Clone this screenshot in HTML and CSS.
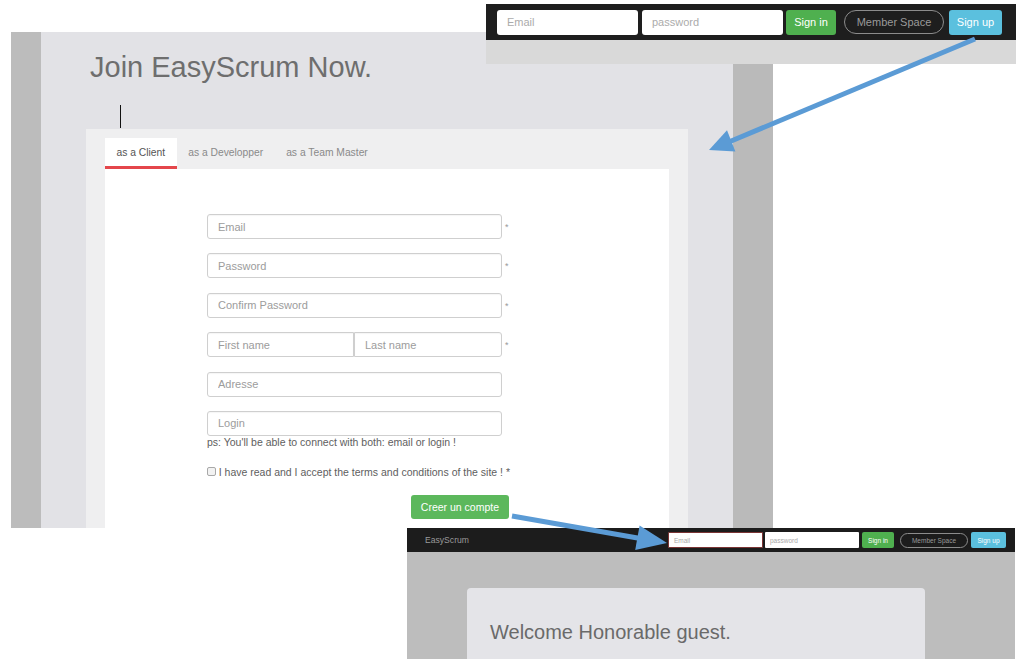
FILE: index.html
```html
<!DOCTYPE html>
<html lang="en">
<head>
<meta charset="utf-8">
<title>Join EasyScrum Now.</title>
<link rel="stylesheet" href="styles.css">
</head>
<body>
<div class="canvas">

  <section class="shot shot-main">
    <div class="strip-left"></div>
    <div class="main-area">
      <h1 class="title">Join EasyScrum Now.</h1>
      <div class="caret"></div>
      <div class="card">
        <div class="tabs">
          <div class="tab active">as a Client</div>
          <div class="tab">as a Developper</div>
          <div class="tab">as a Team Master</div>
        </div>
        <div class="panel">
          <form class="form">
            <div class="row"><input class="field" placeholder="Email"><span class="req">*</span></div>
            <div class="row"><input class="field" placeholder="Password"><span class="req">*</span></div>
            <div class="row"><input class="field" placeholder="Confirm Password"><span class="req">*</span></div>
            <div class="row"><input class="field first" placeholder="First name"><input class="field last" placeholder="Last name"><span class="req">*</span></div>
            <div class="row"><input class="field" placeholder="Adresse"></div>
            <div class="row row-last"><input class="field" placeholder="Login"></div>
            <p class="note">ps: You'll be able to connect with both: email or login !</p>
            <div class="check-row"><span class="checkbox"></span><span class="check-label">I have read and I accept the terms and conditions of the site ! *</span></div>
            <div class="btn-create">Creer un compte</div>
          </form>
        </div>
      </div>
    </div>
    <div class="strip-right"></div>
  </section>

  <section class="shot shot-top">
    <div class="topbar">
      <div class="t-input t-email">Email</div>
      <div class="t-input t-pass">password</div>
      <div class="t-btn t-signin">Sign in</div>
      <div class="t-pill">Member Space</div>
      <div class="t-btn t-signup">Sign up</div>
    </div>
    <div class="topstrip"></div>
  </section>

  <section class="shot shot-bottom">
    <div class="bbar">
      <span class="brand">EasyScrum</span>
      <div class="bgroup">
        <div class="b-input b-email">Email</div>
        <div class="b-input b-pass">password</div>
        <div class="b-btn b-signin">Sign in</div>
        <div class="b-pill">Member Space</div>
        <div class="b-btn b-signup">Sign up</div>
      </div>
    </div>
    <div class="bpanel">
      <p class="welcome">Welcome Honorable guest.</p>
    </div>
  </section>

  <svg class="arrows" width="1024" height="666" viewBox="0 0 1024 666" aria-hidden="true">
    <line x1="975" y1="39" x2="730" y2="141.5" stroke="#5b9bd5" stroke-width="5"/>
    <polygon points="709,150 735.4,151.5 727,130.3" fill="#5b9bd5"/>
    <line x1="512" y1="516" x2="639" y2="538.3" stroke="#5b9bd5" stroke-width="5"/>
    <polygon points="667,543 639.6,525.5 635.2,550.1" fill="#5b9bd5"/>
  </svg>
</div>
</body>
</html>
```

FILE: styles.css
```css
html, body {
  margin: 0;
  padding: 0;
  background: #ffffff;
}

.canvas {
  position: relative;
  width: 1024px;
  height: 666px;
  overflow: hidden;
  background: #ffffff;
  font-family: "Liberation Sans", Arial, sans-serif;
}

.shot {
  position: absolute;
  box-sizing: border-box;
}

/* ---------- main screenshot ---------- */
.shot-main {
  left: 11px;
  top: 32px;
  width: 762px;
  height: 496px;
  display: flex;
  overflow: hidden;
}

.strip-left {
  width: 30px;
  background: #bcbcbc;
}

.strip-right {
  width: 40px;
  background: #bababa;
}

.main-area {
  width: 692px;
  background: #e2e2e6;
  padding-top: 18px;
  box-sizing: border-box;
  display: flex;
  flex-direction: column;
}

.title {
  margin: 0 0 0 49px;
  font-size: 29px;
  line-height: 34px;
  font-weight: normal;
  color: #6e6e6e;
}

.caret {
  margin: 21px 0 0 79px;
  width: 1px;
  height: 23px;
  background: #111111;
}

.card {
  margin: 1px 0 0 45px;
  width: 602px;
  flex: 1;
  background: #efeff0;
  padding: 9px 19px 0;
  box-sizing: border-box;
  display: flex;
  flex-direction: column;
}

.tabs {
  display: flex;
  align-items: flex-start;
  height: 31px;
}

.tab {
  height: 28px;
  padding: 0 11.5px;
  display: flex;
  align-items: center;
  font-size: 10.3px;
  color: #8a8a8a;
}

.tab.active {
  background: #ffffff;
  color: #555555;
  border-bottom: 3px solid #e4464b;
}

.panel {
  flex: 1;
  background: #ffffff;
  padding: 45px 0 0 102px;
}

.form {
  width: 303px;
  margin: 0;
  display: flex;
  flex-direction: column;
}

.row {
  display: flex;
  align-items: flex-start;
  margin-bottom: 14.4px;
}

.row-last {
  margin-bottom: 0;
}

.field {
  width: 295px;
  height: 25px;
  box-sizing: border-box;
  margin: 0;
  border: 1px solid #cfcfcf;
  border-radius: 3px;
  padding: 0 10px;
  font-family: "Liberation Sans", Arial, sans-serif;
  font-size: 11px;
  color: #555;
  background: #fff;
  outline: none;
  box-shadow: inset 0 1px 1px rgba(0,0,0,0.04);
}

.field::placeholder {
  color: #9c9c9c;
}

.field.first {
  width: 147px;
  border-radius: 3px 0 0 3px;
}

.field.last {
  width: 148px;
  border-radius: 0 3px 3px 0;
}

.req {
  margin: 8px 0 0 3px;
  font-size: 9px;
  line-height: 10px;
  color: #9a9a9a;
}

.note {
  margin: 0;
  font-size: 10.5px;
  line-height: 12px;
  color: #5e5e5e;
}

.check-row {
  margin-top: 18px;
  display: flex;
  align-items: center;
  height: 12px;
}

.checkbox {
  width: 9px;
  height: 9px;
  box-sizing: border-box;
  border: 1px solid #a8a8a8;
  border-radius: 2px;
  background: #f2f2f2;
}

.check-label {
  margin-left: 3px;
  font-size: 10.5px;
  line-height: 12px;
  color: #5e5e5e;
  white-space: nowrap;
}

.btn-create {
  align-self: flex-end;
  margin: 17px 1px 0 0;
  height: 24px;
  padding: 0 10px;
  display: flex;
  align-items: center;
  border-radius: 3px;
  background: #5cb85c;
  color: #ffffff;
  font-size: 10.5px;
}

/* ---------- top navbar screenshot ---------- */
.shot-top {
  left: 486px;
  top: 4px;
  width: 530px;
  display: flex;
  flex-direction: column;
}

.topbar {
  height: 36px;
  background: #1e1e1e;
  display: flex;
  align-items: center;
  padding: 0 14px 0 11px;
}

.topstrip {
  height: 24px;
  background: #d9d9d9;
}

.t-input {
  width: 141px;
  height: 25px;
  box-sizing: border-box;
  border-radius: 3px;
  background: #ffffff;
  padding: 0 10px;
  display: flex;
  align-items: center;
  font-size: 11px;
  color: #ababab;
}

.t-pass { margin-left: 4px; }

.t-btn {
  height: 25px;
  border-radius: 3px;
  display: flex;
  align-items: center;
  justify-content: center;
  font-size: 11px;
  color: #ffffff;
}

.t-signin {
  width: 50px;
  margin-left: 3px;
  background: #4fb04f;
}

.t-pill {
  width: 100px;
  height: 24px;
  margin-left: 8px;
  box-sizing: border-box;
  border: 1px solid #8c8c8c;
  border-radius: 12px;
  display: flex;
  align-items: center;
  justify-content: center;
  font-size: 11px;
  color: #9a9a9a;
}

.t-signup {
  width: 53px;
  margin-left: 5px;
  background: #5bc0de;
}

/* ---------- bottom screenshot ---------- */
.shot-bottom {
  left: 407px;
  top: 528px;
  width: 608px;
  height: 131px;
  background: #bdbdbd;
  display: flex;
  flex-direction: column;
  overflow: hidden;
}

.bbar {
  height: 24px;
  flex: none;
  background: #1c1c1c;
  display: flex;
  align-items: center;
  padding: 0 9px 0 18px;
}

.brand {
  font-size: 8.6px;
  color: #9a9a9a;
}

.bgroup {
  margin-left: auto;
  display: flex;
  align-items: center;
}

.b-input {
  height: 16px;
  box-sizing: border-box;
  background: #ffffff;
  padding: 0 5px;
  display: flex;
  align-items: center;
  font-size: 6.5px;
  color: #a8a8a8;
  border-radius: 1px;
}

.b-email {
  width: 95px;
  border: 1px solid #7a3434;
}

.b-pass {
  width: 94px;
  margin-left: 2px;
}

.b-btn {
  height: 16px;
  border-radius: 2px;
  display: flex;
  align-items: center;
  justify-content: center;
  font-size: 6.5px;
  color: #ffffff;
}

.b-signin {
  width: 32px;
  margin-left: 3px;
  background: #4fb04f;
}

.b-pill {
  width: 68px;
  height: 15px;
  margin-left: 6px;
  box-sizing: border-box;
  border: 1px solid #8c8c8c;
  border-radius: 8px;
  display: flex;
  align-items: center;
  justify-content: center;
  font-size: 6.5px;
  color: #9a9a9a;
}

.b-signup {
  width: 35px;
  margin-left: 3px;
  background: #5bc0de;
}

.bpanel {
  margin: 36px 0 0 60px;
  width: 458px;
  flex: 1;
  background: #e4e4e8;
  border-radius: 4px 4px 0 0;
  padding: 32px 0 0 23px;
  box-sizing: border-box;
}

.welcome {
  margin: 0;
  font-size: 20px;
  line-height: 24px;
  color: #6a6a6a;
}

/* ---------- annotation arrows ---------- */
.arrows {
  position: absolute;
  left: 0;
  top: 0;
  pointer-events: none;
}
```
